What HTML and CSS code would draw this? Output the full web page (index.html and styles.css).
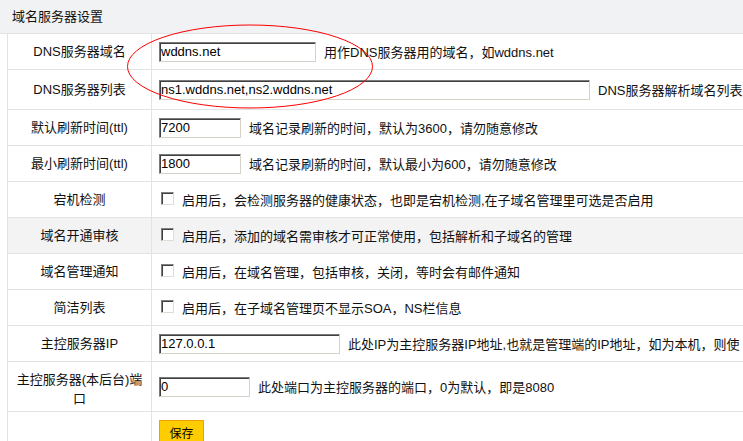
FILE: index.html
```html
<!DOCTYPE html>
<html lang="zh-CN">
<head>
    <meta charset="UTF-8">
    <meta name="viewport" content="width=device-width, initial-scale=1.0">
    <title>域名服务器设置</title>
    <link rel="stylesheet" href="styles.css">
</head>
<body>
    <div class="page">
        <div class="panel-title">域名服务器设置</div>
        <form class="setting-form">
            <div class="row">
                <div class="label">DNS服务器域名</div>
                <div class="field">
                    <input type="text" class="ipt ipt-m" value="wddns.net">
                    <span>用作DNS服务器用的域名，如wddns.net</span>
                </div>
            </div>
            <div class="row row-tall">
                <div class="label">DNS服务器列表</div>
                <div class="field">
                    <input type="text" class="ipt ipt-xl" value="ns1.wddns.net,ns2.wddns.net">
                    <span>DNS服务器解析域名列表</span>
                </div>
            </div>
            <div class="row">
                <div class="label">默认刷新时间(ttl)</div>
                <div class="field">
                    <input type="text" class="ipt ipt-s" value="7200">
                    <span>域名记录刷新的时间，默认为3600，请勿随意修改</span>
                </div>
            </div>
            <div class="row">
                <div class="label">最小刷新时间(ttl)</div>
                <div class="field">
                    <input type="text" class="ipt ipt-s" value="1800">
                    <span>域名记录刷新的时间，默认最小为600，请勿随意修改</span>
                </div>
            </div>
            <div class="row">
                <div class="label">宕机检测</div>
                <div class="field">
                    <input type="checkbox" class="chk">
                    <span>启用后，会检测服务器的健康状态，也即是宕机检测,在子域名管理里可选是否启用</span>
                </div>
            </div>
            <div class="row row-hover">
                <div class="label">域名开通审核</div>
                <div class="field">
                    <input type="checkbox" class="chk">
                    <span>启用后，添加的域名需审核才可正常使用，包括解析和子域名的管理</span>
                </div>
            </div>
            <div class="row">
                <div class="label">域名管理通知</div>
                <div class="field">
                    <input type="checkbox" class="chk">
                    <span>启用后，在域名管理，包括审核，关闭，等时会有邮件通知</span>
                </div>
            </div>
            <div class="row">
                <div class="label">简洁列表</div>
                <div class="field">
                    <input type="checkbox" class="chk">
                    <span>启用后，在子域名管理页不显示SOA，NS栏信息</span>
                </div>
            </div>
            <div class="row">
                <div class="label">主控服务器IP</div>
                <div class="field">
                    <input type="text" class="ipt ipt-l" value="127.0.0.1">
                    <span>此处IP为主控服务器IP地址,也就是管理端的IP地址，如为本机，则使</span>
                </div>
            </div>
            <div class="row row-double">
                <div class="label">主控服务器(本后台)端口</div>
                <div class="field">
                    <input type="text" class="ipt ipt-port" value="0">
                    <span>此处端口为主控服务器的端口，0为默认，即是8080</span>
                </div>
            </div>
            <div class="row row-submit">
                <div class="label"></div>
                <div class="field">
                    <button type="submit" class="btn-save">保存</button>
                </div>
            </div>
        </form>

        <!-- hand-drawn mark around the domain inputs -->
        <svg class="mark" width="743" height="441" viewBox="0 0 743 441">
            <ellipse cx="250" cy="66.5" rx="122.5" ry="41.5" fill="none" stroke="#ff0000" stroke-width="1"/>
        </svg>
    </div>
</body>
</html>
```

FILE: styles.css
```css
/* Basic Reset */
* {
    margin: 0;
    padding: 0;
    box-sizing: border-box;
}

html, body {
    overflow: hidden;
}

body {
    font-family: 'Liberation Sans', 'Noto Sans CJK SC', sans-serif;
    font-size: 13px;
    color: #111;
    background: #fff;
}

.page {
    position: relative;
    width: 743px;
    height: 441px;
    overflow: hidden;
}

/* Title bar */
.panel-title {
    height: 34px;
    line-height: 33px;
    padding-left: 12px;
    background: #f1f2f4;
    border-bottom: 1px solid #e1e3e7;
    width: 960px;
}

/* Form rows */
.setting-form {
    margin-left: 7px;
    width: 953px;
    border-left: 1px solid #e1e3e7;
}

.row {
    display: flex;
    height: 36px;
    border-bottom: 1px solid #e1e3e7;
}

.row-tall {
    height: 40px;
}

.row-double {
    height: 50px;
}

.row-submit {
    height: 44px;
    border-bottom: none;
}

.row-hover {
    background: #f3f3f3;
}

.label {
    flex: 0 0 144px;
    display: flex;
    align-items: center;
    justify-content: center;
    text-align: center;
    padding: 0 6px;
    line-height: 19px;
    border-right: 1px solid #e1e3e7;
}

.row-double .label {
    padding-top: 4px;
}

.field {
    flex: 1;
    display: flex;
    align-items: center;
    gap: 8px;
    padding-left: 7px;
    white-space: nowrap;
}

.row-submit .field {
    align-items: flex-start;
    padding-top: 8px;
}

/* Inputs */
.ipt {
    height: 20px;
    padding: 0 1px;
    font-family: 'Liberation Sans', sans-serif;
    font-size: 13px;
    color: #000;
    background: #fff;
    border: 1px solid;
    border-color: #7a7a7a #d6d2ca #d6d2ca #7a7a7a;
    box-shadow: inset 1px 1px 0 #404040;
    outline: none;
}

.ipt-s {
    width: 82px;
}

.ipt-port {
    width: 91px;
}

.ipt-m {
    width: 157px;
}

.ipt-l {
    width: 181px;
}

.ipt-xl {
    width: 431px;
}

.chk {
    appearance: none;
    -webkit-appearance: none;
    width: 13px;
    height: 13px;
    margin: -3px 0 0 2px;
    background: #fff;
    border: 1px solid;
    border-color: #808080 #e0ddd6 #e0ddd6 #808080;
    box-shadow: inset 1px 1px 0 #404040;
}

.btn-save {
    width: 45px;
    height: 24px;
    font-family: 'Noto Sans CJK SC', sans-serif;
    font-size: 12px;
    color: #000;
    background: #ffcc00;
    border: 1px solid #f0a000;
    cursor: pointer;
}

/* Annotation */
.mark {
    position: absolute;
    left: 0;
    top: 0;
    pointer-events: none;
}
```
